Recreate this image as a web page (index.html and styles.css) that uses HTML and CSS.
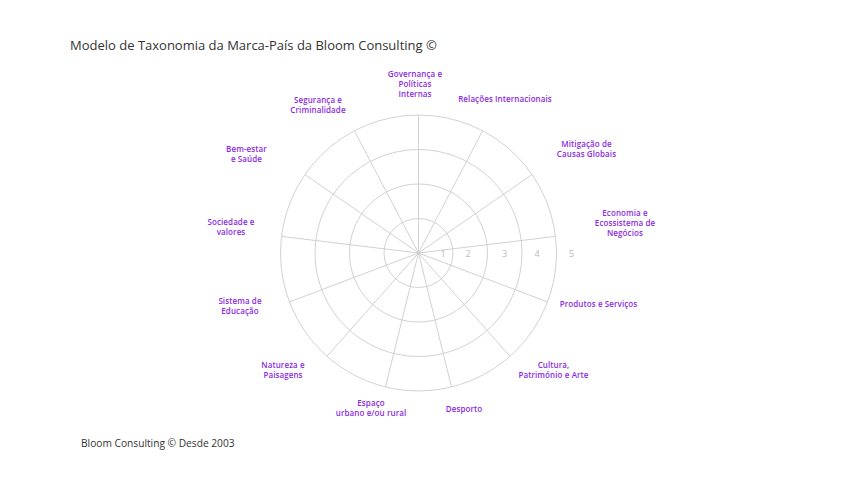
FILE: index.html
```html
<!DOCTYPE html>
<html lang="pt">
<head>
<meta charset="utf-8">
<title>Modelo de Taxonomia</title>
<link rel="stylesheet" href="styles.css">
</head>
<body>
<div class="page">
  <header class="head">
    <h1 class="title">Modelo de Taxonomia da Marca-País da Bloom Consulting ©</h1>
  </header>
  <main class="chart">
    <svg class="radar" width="849" height="370" viewBox="0 0 849 370">
      <g class="rings">
        <circle cx="418.5" cy="193" r="34.5"/>
        <circle cx="418.5" cy="193" r="69"/>
        <circle cx="418.5" cy="193" r="103.5"/>
        <circle cx="418.5" cy="193" r="138"/>
      </g>
      <g class="spokes">
        <line x1="418.5" y1="193" x2="418.5" y2="55"/>
        <line x1="418.5" y1="193" x2="482.63" y2="70.80"/>
        <line x1="418.5" y1="193" x2="532.07" y2="114.60"/>
        <line x1="418.5" y1="193" x2="555.49" y2="176.37"/>
        <line x1="418.5" y1="193" x2="547.53" y2="241.93"/>
        <line x1="418.5" y1="193" x2="510.01" y2="296.29"/>
        <line x1="418.5" y1="193" x2="451.52" y2="326.98"/>
        <line x1="418.5" y1="193" x2="385.48" y2="326.98"/>
        <line x1="418.5" y1="193" x2="326.99" y2="296.29"/>
        <line x1="418.5" y1="193" x2="289.47" y2="241.93"/>
        <line x1="418.5" y1="193" x2="281.51" y2="176.37"/>
        <line x1="418.5" y1="193" x2="304.93" y2="114.60"/>
        <line x1="418.5" y1="193" x2="354.37" y2="70.80"/>
      </g>
      <g class="ticks">
        <text x="443" y="197">1</text>
        <text x="468" y="197">2</text>
        <text x="504.5" y="197">3</text>
        <text x="537" y="197">4</text>
        <text x="571.5" y="197">5</text>
      </g>
    </svg>
    <div class="lbl" style="left:415px;top:23.5px">Governança e<br>Políticas<br>Internas</div>
    <div class="lbl" style="left:505px;top:38.5px">Relações Internacionais</div>
    <div class="lbl" style="left:586.5px;top:88.5px">Mitigação de<br>Causas Globais</div>
    <div class="lbl" style="left:625px;top:163px">Economia e<br>Ecossistema de<br>Negócios</div>
    <div class="lbl" style="left:598.5px;top:244px">Produtos e Serviços</div>
    <div class="lbl" style="left:553.5px;top:310px">Cultura,<br>Património e Arte</div>
    <div class="lbl" style="left:464px;top:348.5px">Desporto</div>
    <div class="lbl" style="left:371px;top:347.5px">Espaço<br>urbano e/ou rural</div>
    <div class="lbl" style="left:283px;top:309.5px">Natureza e<br>Paisagens</div>
    <div class="lbl" style="left:240px;top:246px">Sistema de<br>Educação</div>
    <div class="lbl" style="left:231px;top:167px">Sociedade e<br>valores</div>
    <div class="lbl" style="left:246.5px;top:94px">Bem-estar<br>e Saúde</div>
    <div class="lbl" style="left:318px;top:44.5px">Segurança e<br>Criminalidade</div>
  </main>
  <footer class="foot">Bloom Consulting © Desde 2003</footer>
</div>
</body>
</html>
```
FILE: styles.css
```css
html, body {
  margin: 0;
  padding: 0;
  background: #ffffff;
}
.page {
  width: 849px;
  height: 478px;
  display: flex;
  flex-direction: column;
  font-family: "Open Sans", "Liberation Sans", sans-serif;
}
.head {
  height: 60px;
  padding: 36px 0 0 70px;
  box-sizing: border-box;
}
.title {
  margin: 0;
  font-size: 13px;
  font-weight: 400;
  line-height: 18px;
  color: #333333;
}
.chart {
  position: relative;
  width: 849px;
  height: 370px;
}
.radar {
  display: block;
}
.rings circle {
  fill: none;
  stroke: #cccccc;
  stroke-width: 0.9;
}
.spokes line {
  stroke: #cccccc;
  stroke-width: 0.9;
}
.ticks text {
  font-family: "Open Sans", "Liberation Sans", sans-serif;
  font-size: 9px;
  fill: #bbbbbb;
  text-anchor: middle;
}
.lbl {
  position: absolute;
  transform: translate(-50%, -50%);
  white-space: nowrap;
  text-align: center;
  font-size: 8px;
  line-height: 10px;
  font-weight: 600;
  color: #8a2be2;
  letter-spacing: 0.1px;
}
.foot {
  padding: 6px 0 0 81px;
  font-size: 10.2px;
  line-height: 14px;
  color: #333333;
}
```
